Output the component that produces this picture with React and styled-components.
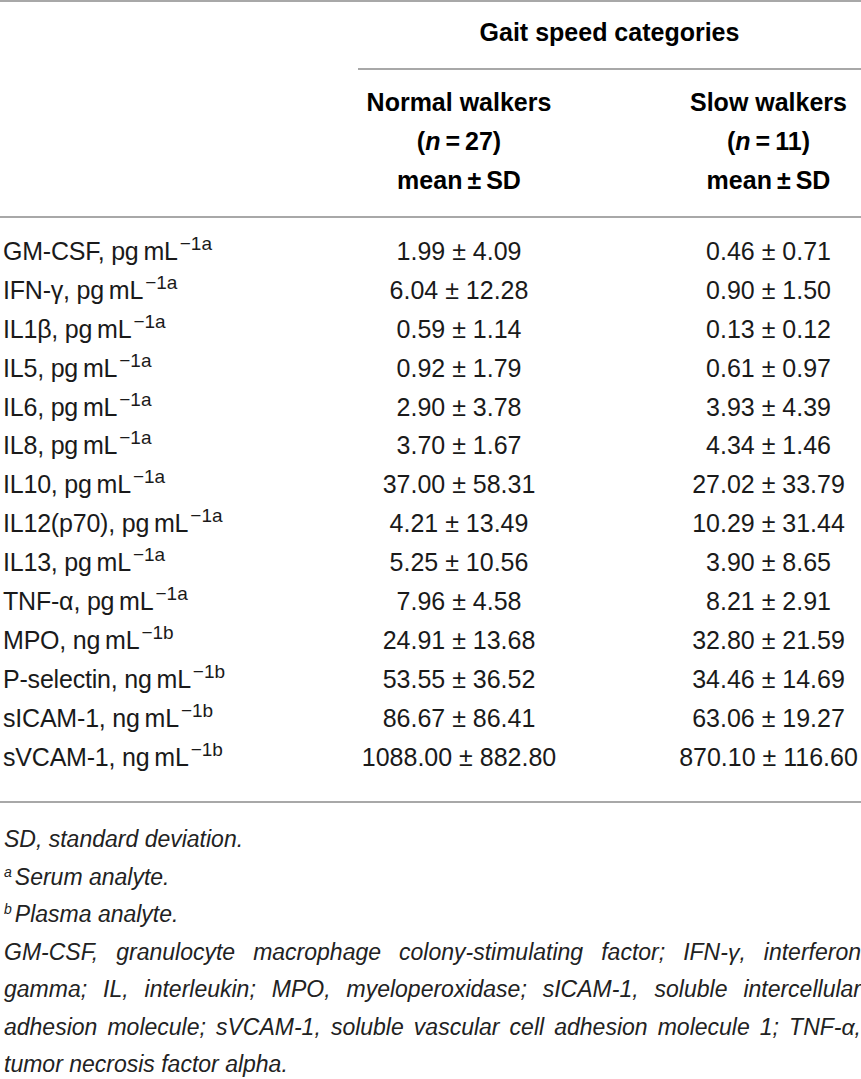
import styled, { createGlobalStyle } from "styled-components";

const rows = [
  ["GM-CSF", "pg", "a", "1.99 ± 4.09", "0.46 ± 0.71"],
  ["IFN-γ", "pg", "a", "6.04 ± 12.28", "0.90 ± 1.50"],
  ["IL1β", "pg", "a", "0.59 ± 1.14", "0.13 ± 0.12"],
  ["IL5", "pg", "a", "0.92 ± 1.79", "0.61 ± 0.97"],
  ["IL6", "pg", "a", "2.90 ± 3.78", "3.93 ± 4.39"],
  ["IL8", "pg", "a", "3.70 ± 1.67", "4.34 ± 1.46"],
  ["IL10", "pg", "a", "37.00 ± 58.31", "27.02 ± 33.79"],
  ["IL12(p70)", "pg", "a", "4.21 ± 13.49", "10.29 ± 31.44"],
  ["IL13", "pg", "a", "5.25 ± 10.56", "3.90 ± 8.65"],
  ["TNF-α", "pg", "a", "7.96 ± 4.58", "8.21 ± 2.91"],
  ["MPO", "ng", "b", "24.91 ± 13.68", "32.80 ± 21.59"],
  ["P-selectin", "ng", "b", "53.55 ± 36.52", "34.46 ± 14.69"],
  ["sICAM-1", "ng", "b", "86.67 ± 86.41", "63.06 ± 19.27"],
  ["sVCAM-1", "ng", "b", "1088.00 ± 882.80", "870.10 ± 116.60"],
];

const groups = [
  { title: "Normal walkers", n: 27 },
  { title: "Slow walkers", n: 11 },
];

function App() {
  return (
    <>
      <GlobalStyle />
      <Table>
        <HeadTop>
          <span />
          <GroupCell>Gait speed categories</GroupCell>
        </HeadTop>
        <HeadSub>
          <span />
          {groups.map((g, i) => (
            <HeadCell key={g.title} $last={i === 1}>
              <div>{g.title}</div>
              <div>
                (<em>n</em>{"\u2009=\u2009"}{g.n})
              </div>
              <div>mean{"\u2009±\u2009"}SD</div>
            </HeadCell>
          ))}
        </HeadSub>
        <Body>
          {rows.map(([name, unit, note, normal, slow]) => (
            <Row key={name}>
              <Label>
                {name}, {unit}
                {"\u2009"}mL<Sup>−1{note}</Sup>
              </Label>
              <Value>{normal}</Value>
              <Value $last>{slow}</Value>
            </Row>
          ))}
        </Body>
        <Footer>
          <Note>SD, standard deviation.</Note>
          <Note>
            <NoteSup>a</NoteSup>Serum analyte.
          </Note>
          <Note>
            <NoteSup>b</NoteSup>Plasma analyte.
          </Note>
          <Note $justify>
            GM-CSF, granulocyte macrophage colony-stimulating factor; IFN-γ, interferon
          </Note>
          <Note $justify>
            gamma; IL, interleukin; MPO, myeloperoxidase; sICAM-1, soluble intercellular
          </Note>
          <Note $justify>
            adhesion molecule; sVCAM-1, soluble vascular cell adhesion molecule 1; TNF-α,
          </Note>
          <Note>tumor necrosis factor alpha.</Note>
        </Footer>
      </Table>
    </>
  );
}

export default App;

const GlobalStyle = createGlobalStyle`
  body {
    margin: 0;
    background: #fff;
    font-family: "Liberation Sans", Arial, sans-serif;
    color: #1a1a1a;
  }
`;

const Table = styled.div`
  width: 861px;
  border-top: 2px solid #a8a8a8;
`;

const columns = `
  display: grid;
  grid-template-columns: 358px 202px 1fr;
`;

const HeadTop = styled.div`
  ${columns}
`;

const GroupCell = styled.div`
  grid-column: 2 / 4;
  padding: 11px 0 16px;
  line-height: 39px;
  font-size: 25px;
  font-weight: bold;
  color: #000;
  text-align: center;
  border-bottom: 2px solid #a8a8a8;
`;

const HeadSub = styled.div`
  ${columns}
  padding: 13px 0 16px;
  border-bottom: 2px solid #a8a8a8;
`;

const HeadCell = styled.div`
  text-align: center;
  padding-left: ${(p) => (p.$last ? "116px" : "0")};
  font-size: 25px;
  font-weight: bold;
  line-height: 39px;
  color: #000;

  em {
    font-style: italic;
  }
`;

const Body = styled.div`
  padding: 14px 0 25px;
  border-bottom: 2px solid #a8a8a8;
`;

const Row = styled.div`
  ${columns}
  height: 38.9px;
  align-items: center;
  font-size: 25px;
`;

const Label = styled.div`
  padding-left: 3px;
  white-space: nowrap;
  letter-spacing: -0.2px;
`;

const Sup = styled.sup`
  font-size: 19px;
  vertical-align: 10px;
  line-height: 0;
  margin-left: 2px;
  letter-spacing: 0;
`;

const Value = styled.div`
  text-align: center;
  white-space: nowrap;
  padding-left: ${(p) => (p.$last ? "116px" : "0")};
`;

const Footer = styled.div`
  padding: 18px 0 0;
`;

const Note = styled.div`
  font-size: 23px;
  font-style: italic;
  line-height: 37.4px;
  padding-left: 4px;
  white-space: nowrap;
  text-align: ${(p) => (p.$justify ? "justify" : "left")};
  text-align-last: ${(p) => (p.$justify ? "justify" : "auto")};
  color: #222;
`;

const NoteSup = styled.sup`
  font-size: 14px;
  vertical-align: 8px;
  line-height: 0;
  margin-right: 3px;
`;
